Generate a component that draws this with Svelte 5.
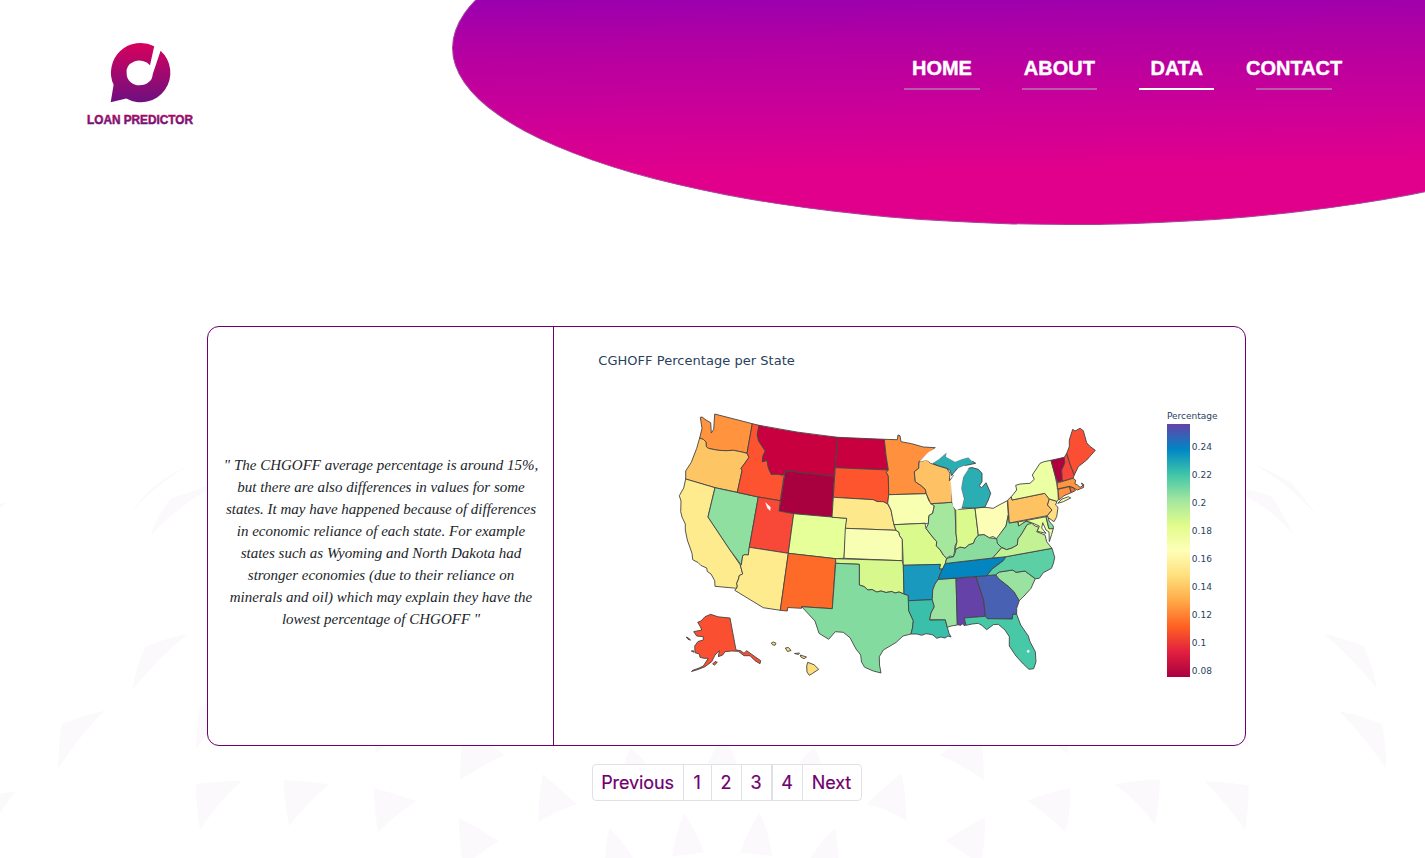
<script>
  const nav = [
    { label: 'HOME' },
    { label: 'ABOUT' },
    { label: 'DATA', active: true },
    { label: 'CONTACT' },
  ];

  const quote = [
    '" The CHGOFF average percentage is around 15%,',
    'but there are also differences in values for some',
    'states. It may have happened because of differences',
    'in economic reliance of each state. For example',
    'states such as Wyoming and North Dakota had',
    'stronger economies (due to their reliance on',
    'minerals and oil) which may explain they have the',
    'lowest percentage of CHGOFF "',
  ];

  const pages = [
    { label: 'Previous', w: 92 },
    { label: '1', w: 29 },
    { label: '2', w: 31 },
    { label: '3', w: 31 },
    { label: '4', w: 31, apart: true },
    { label: 'Next', w: 60 },
  ];

  const ticks = ['0.24', '0.22', '0.2', '0.18', '0.16', '0.14', '0.12', '0.1', '0.08'];

  const scale = [
    '#6542a7', '#0086c5', '#40c6a8', '#a2e69f', '#e1fc8b', '#feffb8',
    '#ffdf7d', '#ffa947', '#ff6122', '#e2203f', '#a90040',
  ];

  const states = [
    { id: 'WA', c: '#ff933e', d: 'M714.7 414L752.3 423.7L747 453.3L742 452L733.3 450.3L726 450.7L718.3 450.3L713 449.3L708.3 448.3L706.3 446.7L706 442L703.5 439.5L699.7 438L702 428.3L700.3 417.3L702 417L706 420L710.7 422.7L711.3 433L713.7 429.3L714.3 420Z' },
    { id: 'OR', c: '#fec565', d: 'M699.7 438L703.5 439.5L706 442L706.3 446.7L708.3 448.3L713 449.3L718.3 450.3L726 450.7L733.3 450.3L742 452L747 453.3L749 457.3L745 463L741 468.3L742 470.7L737.3 492.3L715 487.7L685.7 479V471L691.3 462.3L696.7 448.3Z' },
    { id: 'CA', c: '#feeb8e', d: 'M685.7 479L715 487.7L708 517L730 550L740.3 565L742.7 574L739.3 575.5L738.5 579L736.7 583.3L737.3 586L736.7 588.3L715 586.3L714.7 580.7L711 574L707.3 571.5L706.7 568L701 565.5L698 562.5L692.7 559.7L692 553.3L687.3 540L685.3 530V524L682 517L680.7 511.7L681 501L679.3 495.7L683.7 488Z' },
    { id: 'NV', c: '#8fdfa0', d: 'M715 487.7L758.3 497L749.3 547.3L748.3 555L745 554.6L742.7 555.7L741.3 565L730 550L708 517Z' },
    { id: 'ID', c: '#fd5330', d: 'M752.3 423.7L759 425.3L757.3 434.7L758.7 441L762 446L765.3 451L763 456L762.3 461.7L767 460.3L768.5 468L771.3 474.3L777 474L782 475L784.3 474L780.3 500.7L758.3 497L737.3 492.3L742 470.7L741 468.3L745 463L749 457.3L747 453.3Z' },
    { id: 'MT', c: '#c9003f', d: 'M759 425.3Q797 433 837.7 437.3L834.3 476.3L785.3 470.7L784.3 474L782 475L777 474L771.3 474.3L768.5 468L767 460.3L762.3 461.7L763 456L765.3 451L762 446L758.7 441L757.3 434.7Z' },
    { id: 'WY', c: '#a90040', d: 'M785.3 470.7L834.3 476.3L832 517.3L793.7 513.7L779 511Z' },
    { id: 'UT', c: '#f84837', d: 'M758.3 497L780.3 500.7L779 511L793.7 513.7L788.3 553.3L749.3 547.3Z' },
    { id: 'CO', c: '#e7ff98', d: 'M793.7 513.7L846.7 518.3L844 558.3L835.7 558.7L788.3 553.3Z' },
    { id: 'AZ', c: '#feeb8e', d: 'M749.3 547.3L788.3 553.3L780.3 610.3L763.3 607.7L734.7 590.3L736.7 588.3L737.3 586L736.7 583.3L738.5 579L739.3 575.5L742.7 574L740.3 565L741.3 565L742.7 555.7L745 554.6L748.3 555Z' },
    { id: 'NM', c: '#fe6a28', d: 'M788.3 553.3L835.7 558.7L832.3 608.7L801.7 606.7L801.5 608.3L787.7 607.5L787.3 611L780.3 610.3Z' },
    { id: 'ND', c: '#c9003f', d: 'M837.7 437.3L884.3 439.3L886 455L888.3 470L835.3 467.7Z' },
    { id: 'SD', c: '#fe552f', d: 'M835.3 467.7L888.3 470L886.3 472.3L888.3 476L888.7 494.7L887.7 504L883.3 501.7L877 501.5L873.3 499.7L833.3 497.3Z' },
    { id: 'NE', c: '#fde88b', d: 'M833.3 497.3L873.3 499.7L877 501.5L883.3 501.7L887.7 504L891 510L892.3 516.7L894 524.7L896 530.3L845.3 528.3L846.7 518.3L832 517.3Z' },
    { id: 'KS', c: '#f8ffb2', d: 'M845.3 528.3L896 530.3L899 532.3L899.5 535.5L902.3 539.3V560.7L844 558.3Z' },
    { id: 'OK', c: '#d6f88c', d: 'M835.7 558.7L902.3 560.7L903.3 565.3L904 594L899 592L895 593L891.7 591.5L886 592.5L881 591L876.7 592L872 589.5L868 590L864 586.5L859.3 585V564.3L835.7 563.3Z' },
    { id: 'TX', c: '#83dba0', d: 'M835.7 563.3L859.3 564.3V585L864 586.5L868 590L872 589.5L876.7 592L881 591L886 592.5L891.7 591.5L895 593L899 592L904 594L908.3 595.3L908.7 610.7L913.3 620.7L912.5 628L911 634L903 636L896 642.5L883.3 650L879.3 656.7L879.5 665L881 673L873.3 671L864.7 667.3L861.5 662L860.7 655L856 649L850 637.7L843.3 632.3L835.3 631.7L828.7 639.3L819 633.3L815 621L808 613.5L801.7 606.7L832.3 608.7Z' },
    { id: 'MN', c: '#ff903d', d: 'M884.3 439.3L897.3 439.7L898 435L900 435.7L901 441.7L911.7 443.7L918 445.5L923.3 447L935.3 447.7L919 461.7L918.7 468.3L914.3 471.7L915.3 481.7L921 485.5L925.3 489.3L926.3 493.7L888.7 494.7L888.3 476L886.3 472.3L888.3 470L886 455Z' },
    { id: 'IA', c: '#f9ffb1', d: 'M888.7 494.7L926.3 493.7L929 501L934.3 505.7L932.7 513.3L929 515.5L928.6 519L928.3 524L925 523.3L894 524.7L892.3 516.7L891 510L887.7 503.3Z' },
    { id: 'MO', c: '#dafa8d', d: 'M894 524.7L925 523.3L926 528.3L931 535L936.7 541.7L936.3 546L940 549.5L943.3 555L946.7 558.3L945.3 563.3L942.7 569L939.3 569L940.3 564.4L903.3 565.3L902.3 539.3L899.5 535.5L899 532.3L896 530.3Z' },
    { id: 'AR', c: '#1a99be', d: 'M903.3 565.3L940.3 564.4L939.3 569L942.3 569.3L940 574L938.3 579.3L935 584L932.7 590L932.3 599.7L908.3 600.7V595.3L904 594Z' },
    { id: 'LA', c: '#3abfab', d: 'M908.3 600.7L932.3 599.7L934.3 606.7L931 613L929.7 620L945.3 619.7L947.3 627.3L949 633.3L951 637L948 636L945 638L941 637L936.7 638.3L933 635L930 634.3L926 633.7L921.7 635.3L917 634L911 634L912.5 628L913.3 620.7L908.7 610.7Z' },
    { id: 'MS', c: '#9be39f', d: 'M938.3 579.3L956 578.3L957.3 625L951 626L947.3 627.3L945.3 619.7H929.7L931 613L934.3 606.7L932.3 599.7L932.7 590L935 584Z' },
    { id: 'AL', c: '#6542a7', d: 'M956 578.3L976 576.7L983.7 600L985.3 616.3L964.3 618L966 621.7L965 626L962.3 623.8L961 625.3L957.3 624.7Z' },
    { id: 'GA', c: '#4961b3', d: 'M976 576.7L995.7 574.7L999 579L1008 586L1014 591.7L1019.3 600.7L1016.7 608.3V614.3L1012.7 614.3L1012.3 619L987.3 618.7L985.3 616.3L983.7 600Z' },
    { id: 'FL', c: '#47c9a8', d: 'M964.3 618L985.3 616.3L987.3 618.7L1012.3 619L1012.7 614.3H1016.7L1020.7 625L1028.3 636L1030 641.7L1035.3 651.7L1036 661.7L1033.7 668.7L1029 669.3L1023.3 664L1016 656L1009.3 646V636.7L1005 630L998.3 624.3L993.3 624.7L986.7 629.7L982 625.5L978.3 623.3L972 624L966 625.3Z' },
    { id: 'SC', c: '#9ae29f', d: 'M995.7 574.7L999.3 572L1012.7 570L1016 572.3L1025 571L1035.3 578.7L1031 588.3L1025 595L1019.3 600.7L1014 591.7L1008 586L999 579Z' },
    { id: 'NC', c: '#5dcfa4', d: 'M1006 556.7L1052 548.3L1054.7 557.3L1053.5 563L1051.5 568.3L1043.3 572.7L1039.3 578.3L1035.3 578.7L1025 571L1016 572.3L1012.7 570L999.3 572L995.7 574.7L986.7 575.7L991.7 569.3L1000 563.3Z' },
    { id: 'TN', c: '#0386c0', d: 'M945.3 563.7L957.7 562L1006 556.7L1003 561L996 565.5L991.7 569.3L986.7 575.7L938.3 579.3L942.3 569.3Z' },
    { id: 'KY', c: '#8add9f', d: 'M945.3 563.5L946.7 558.3L953.3 556.7L955 553.3L956 549L960 547L965 548L969 544.5L973.3 543.3L975 539L978.3 535L984 534.5L989.3 537.7L997.3 539L998 544L1001.7 547.7L992.7 558L957.7 562Z' },
    { id: 'IL', c: '#a4e79d', d: 'M930.7 503.7L952 502.3L955 510L956 533.3L957 541.7L955 546L954.7 551L953.3 556.7L950 556L946.7 558.3L943.3 555L940 549.5L936.3 546L936.7 541.7L931 535L926 528.3L928.3 524L928.6 519L929 515.5L932.7 513.3L934.3 505.7Z' },
    { id: 'IN', c: '#dbfa8e', d: 'M955.7 509.7L975 508L978.3 535L975 539L973.3 543.3L969 544.5L965 548L960 547L955 549.5L957 541.7L956 533.3Z' },
    { id: 'OH', c: '#fdfeb6', d: 'M975 508L985 507.3L993.3 508.3L1000 504.5L1007.3 500.7L1008.3 515L1006 526L1002 531.5L999.3 536.7L997.3 539L993 536.5L989.3 537.7L984 534.5L978.3 535Z' },
    { id: 'WV', c: '#86dda0', d: 'M1008.3 515L1009.3 523L1017.7 521.7L1018.7 526L1022 523.5L1026 521.3L1031.7 522.7L1030 525L1027.3 524.5L1024 530L1021 535L1018 539L1017.3 545L1012 548L1006.7 549.7L1001 547L997.3 543.3L996.7 538.3L1001.7 531.7L1006 526Z' },
    { id: 'VA', c: '#c2f294', d: 'M992.7 558L1001.7 547.7L1006.7 549.7L1012 548L1017.3 545L1018 539L1021 535L1024 530L1027.3 524.5L1031.7 523.3L1035 526L1039 527.3L1036.7 531.7L1045 535L1046.7 541.7L1050 546L1052 548.3L1006 556.7Z' },
    { id: 'MD', c: '#e7ff98', d: 'M1018.3 522L1046 516.7L1048.7 528.3H1053.3L1051.7 534.3L1049.3 541.7L1049 532L1046 530L1042.7 522.7L1041.7 528L1046 533.3L1037.3 531.3L1039.3 526L1031.7 522.7L1026 521L1018.7 526Z' },
    { id: 'DE', c: '#8cdea0', d: 'M1046 516.7L1048 516L1049 521L1053.3 526V528.7H1049Z' },
    { id: 'PA', c: '#fec263', d: 'M1007.7 500L1011.3 496.7L1012 500L1044.7 493.3L1049.3 499L1047.5 505L1052 510L1047.3 515.7L1009.3 523Z' },
    { id: 'NJ', c: '#fedf82', d: 'M1049.3 499L1057 501.3L1055.5 505L1058 507.3L1056.7 516.7L1054 521.7L1048.3 517.7L1047.3 515.7L1052 510L1047.5 505Z' },
    { id: 'NY', c: '#edffa3', d: 'M1012 500L1011.3 496.7L1016.7 490L1015.7 485.3L1020 484L1030 483.3L1034.3 479.3L1032.3 475L1040 463.3L1044 461.7L1051 460.3L1055 475L1056.7 483.3L1058 490L1058.3 500L1057 501.3L1049.3 499L1044.7 493.3Z M1057.7 503.3L1062 499L1068.3 496.7L1070.7 498L1063.3 501.7Z' },
    { id: 'VT', c: '#b0003e', d: 'M1051 460.3L1064.3 457.3L1064.7 463.3L1061.7 470L1062.3 481L1057.3 482.3L1055 475Z' },
    { id: 'NH', c: '#f74539', d: 'M1064.3 457.3L1066.7 453.3L1070 464L1074.3 475L1073 478.3L1062.3 481.3L1061.7 470L1064.7 463.3Z' },
    { id: 'ME', c: '#fa4f33', d: 'M1066.7 453.3L1069.3 446.7V440L1072.7 429.3L1075 431L1080 428.3L1083.3 430.7L1086.7 442.7L1089.5 446L1095.3 450.3L1086.7 460L1078.3 466.7L1074.3 475L1070 464Z' },
    { id: 'MA', c: '#ff963f', d: 'M1057.3 483L1073 478.3L1075.5 480L1075 484L1077.5 485L1080 487.3L1082.8 486L1081.5 483L1083.7 484.5L1083.5 487.5L1077.3 490L1073.3 487.7L1069.3 486.3L1057.3 489Z' },
    { id: 'RI', c: '#fd6a2d', d: 'M1069.3 486.7L1073.3 487.7L1075.5 490.5L1071.3 492.7Z' },
    { id: 'CT', c: '#ff9140', d: 'M1058 489.3L1069.3 486.7L1071 492.7L1064 495.7L1059 500Z' },
    { id: 'WI', c: '#fec163', d: 'M919 461.7L926.7 460L930.7 463.3L939 466L946.7 468.3L950 473.3L949.3 480.7L954.3 475L951.7 486.7L952 502.3L930.7 503.7L926.3 493.7L925.3 489.3L921 485.5L915.3 481.7L914.3 471.7L918.7 468.3Z' },
    { id: 'MI', c: '#2aadb3', d: 'M932.3 463.3L939 459L946.7 452.3L946 456.7L955 461.7L962 459L968.3 457.3L971.7 460.7L975.7 463.3L970 464.5L963.3 466L957 469L953.3 473.3L951.7 475.7L950 470L946.7 468.3L939 466Z M961.7 508L964 498.3L961 488.3L963.3 476.7L968.3 468.3L972 467.6L978.3 469.3L982 473.3V481.7L979.3 485.7L981.7 487.7L986 482.7L990.7 493.3L988.3 500L985 507L975 508Z' },
    { id: 'AK', c: '#fb4f32', d: 'M710.7 614.3L718 616.8L730 618L736 650L740.7 650.7L744 653.3L746.7 650.7L755 656.7L760.7 660.7L760 663.7L755 660.7L750 655.7L744 655.7L738.3 651.3L731.7 651L725 651.7L722.7 655L718.3 656.7L719.3 650.7L715 655L711.7 661.7L705 666.7L698 669.5L691.5 671.5L692.7 670.3L698 668.5L703.3 666L708.3 658.3L704 658.3L700 657.3L699.3 654L695 652.7L694.7 646L698 641.5L703.3 640V636.7L696.7 636L693.7 631.7L701.7 630L700.5 627L697.7 622.3L701 621L705 616.7Z M686.3 637L688.5 638L690.5 640.2L688 639.3Z M691.3 651L693.5 650.8L693.8 652.2Z M712.7 664L715 661.5L717.3 662.3L714.5 665Z' },
    { id: 'HI', c: '#fedd7b', d: 'M771.3 643L773.5 642L776 643.3L775 645.3L772.5 644.8Z M785.3 648L788.5 647.5L791 650.5L787.5 651.5Z M794.5 653.5L799.5 653L798.5 654.5Z M800.3 655L806.5 657L804 658.7L800.8 657Z M807.7 662.3L814 664.7L818.7 669.3L812.7 673.3L809.3 675.3L807 672L806.7 666Z' },
  ];

  const lakes = [
    'M920 461.2L928.3 452.5L935.8 448.2L944 444L966.7 451.7L978 460L971.7 460.7L968.3 457.3L962 459L955 461.7L946 456.7L946.7 452.3L939 459L932.3 463.3L926.7 460Z',
    'M950.8 480.7L958.3 468.3L964 466L969 466.3L967.5 470L963 477L961 488.3L963.7 499L961.7 507.3L956.7 510L953 506L951.5 491.7Z',
    'M765.7 502.8L768 505L770.3 507L770 510.5L767.5 508Z',
  ];
</script>

<div class="page">
  <svg class="backdrop" viewBox="0 0 1425 858" aria-hidden="true">
    <g transform="translate(0 430) scale(.33333)">
      <path d="M380 260Q430 200 455 175Q510 130 575 103Q480 150 380 260ZM452 315Q480 240 515 203Q570 190 625 165V180Q540 225 452 315ZM398 778Q410 700 437 650Q495 625 562 612Q480 680 398 778ZM175 1015Q175 940 186 882Q250 856 313 842Q240 915 175 1015ZM588 955Q590 880 601 825L625 820V912ZM0 1092L46 1084Q20 1120 0 1150ZM588 1063Q650 1054 724 1053Q650 1120 600 1200Q588 1130 588 1063ZM852 1050Q920 1052 987 1063Q920 1120 868 1188Q852 1120 852 1050ZM1122 1074Q1190 1092 1250 1114Q1190 1150 1135 1207Q1122 1140 1122 1074ZM1126 940H1165L1126 972ZM0 222L20 216L0 235Z" />
    </g>
    <g transform="translate(440 730) scale(.35714)">
      <path d="M62 40H140L180 70Q115 100 56 140Q56 90 62 40ZM288 123Q340 165 382 208Q330 225 275 258Q275 190 288 123ZM514 102Q522 70 534 50Q560 70 582 102V115H514ZM746 102Q762 70 775 43H808Q825 70 834 102V115H746ZM1000 102Q1025 65 1048 48Q1062 70 1068 102V115H1000ZM1398 70L1440 40H1518Q1523 90 1522 140Q1465 100 1398 70ZM1195 208Q1240 160 1293 121Q1305 190 1306 254Q1255 220 1195 208ZM53 247Q110 275 163 310Q110 345 66 384Q53 310 53 247ZM462 384Q463 320 474 273Q520 320 549 374L530 384ZM650 353Q660 285 684 233Q715 280 740 343ZM841 344Q862 280 895 233Q920 280 930 353ZM1030 375Q1060 315 1106 275Q1117 330 1116 384H1055ZM1415 311Q1465 275 1526 245Q1526 320 1514 380Q1465 340 1415 311ZM270 362L296 384H270ZM1310 362V384H1280Z" />
    </g>
    <g transform="translate(980 430) scale(.33333)">
      <path d="M825 104Q880 125 935 160Q975 205 1008 255Q930 165 825 104ZM790 177Q830 180 876 202Q910 250 940 315Q880 240 790 195ZM1030 612Q1100 625 1152 650Q1180 710 1190 775Q1110 675 1030 612ZM1077 843Q1150 858 1207 884Q1220 950 1217 1014Q1150 915 1077 843ZM797 915L804 950L795 940ZM404 1063Q470 1050 539 1049Q539 1120 524 1183Q470 1110 404 1063ZM673 1053Q740 1055 806 1066Q806 1140 795 1200Q740 1120 673 1053ZM142 1113Q200 1087 271 1074Q271 1145 257 1206Q200 1150 142 1113ZM235 950L264 940V972Z" />
    </g>
  </svg>

  <header>
    <div class="blob"></div>
    <svg class="logo" width="112" height="96" viewBox="84 40 112 96" role="img" aria-label="Loan Predictor">
      <defs>
        <linearGradient id="mark" x1="0" y1="43" x2="0" y2="103" gradientUnits="userSpaceOnUse">
          <stop offset="0" stop-color="#d8005c" />
          <stop offset="1" stop-color="#6c1080" />
        </linearGradient>
        <linearGradient id="word" x1="0" y1="113" x2="0" y2="126" gradientUnits="userSpaceOnUse">
          <stop offset="0" stop-color="#b3085f" />
          <stop offset="1" stop-color="#64147f" />
        </linearGradient>
      </defs>
      <path
        fill="url(#mark)"
        d="M154.2 46.3A29.6 29.6 0 0 0 113.6 84.8L110.7 102.2L126.3 98.5A29.6 29.6 0 0 0 160.6 50.7L152.7 74.2A13 11.2 0 0 1 126.7 74A13 11.2 0 0 1 150 65.2Z"
      />
      <text x="87" y="124.3" textLength="106" lengthAdjust="spacingAndGlyphs" fill="url(#word)" stroke="url(#word)">LOAN PREDICTOR</text>
    </svg>
    <nav>
      {#each nav as item}
        <a href="#{item.label.toLowerCase()}" class:active={item.active}>{item.label}</a>
      {/each}
    </nav>
  </header>

  <main>
    <section class="card">
      <blockquote>
        {#each quote as line}
          <span>{line}</span>
        {/each}
      </blockquote>
      <figure>
        <svg width="691" height="418" viewBox="554 327 691 418">
          <defs>
            <linearGradient id="bar" x1="0" y1="0" x2="0" y2="1">
              {#each scale as color, i}
                <stop offset={i / 10} stop-color={color} />
              {/each}
            </linearGradient>
          </defs>
          <text class="title" x="598.3" y="365" textLength="196.5">CGHOFF Percentage per State</text>
          <g class="states">
            {#each states as s (s.id)}
              <path d={s.d} fill={s.c} />
            {/each}
          </g>
          <g class="lakes">
            {#each lakes as d}
              <path {d} />
            {/each}
            <circle cx="1028.2" cy="651.3" r="1.1" />
          </g>
          <text class="tick" x="1167" y="419" textLength="50.5">Percentage</text>
          <rect x="1167" y="424" width="23" height="253" fill="url(#bar)" />
          {#each ticks as t, i}
            <text class="tick" x="1191.8" y={450 + i * 28} textLength={t.length === 4 ? 20.3 : 14.5}>{t}</text>
          {/each}
        </svg>
      </figure>
    </section>

    <ul class="pagination">
      {#each pages as p}
        <li class:apart={p.apart} style="width: {p.w}px"><a href="#page">{p.label}</a></li>
      {/each}
    </ul>
  </main>
</div>

<style>
  :global(body) {
    margin: 0;
    background: #fff;
  }
  .page {
    position: relative;
    width: 1425px;
    height: 858px;
    overflow: hidden;
    font-family: 'Liberation Sans', Arial, sans-serif;
  }
  .backdrop {
    position: absolute;
    inset: 0;
    width: 1425px;
    height: 858px;
    fill: #fbf9fb;
  }
  header {
    position: relative;
    display: flex;
    justify-content: space-between;
    box-sizing: border-box;
    height: 326px;
    padding: 40px 72.2px 0 84px;
    overflow: hidden;
  }
  .blob {
    position: absolute;
    left: 452px;
    top: -129px;
    box-sizing: border-box;
    width: 1232px;
    height: 354px;
    border: 1px solid #a0489c;
    border-radius: 50%;
    background: linear-gradient(179.3deg, #9c00ae 36%, #b300a2 48%, #cc0098 67%, #e1008c 83%);
  }
  .logo {
    position: relative;
    flex: none;
    overflow: visible;
  }
  .logo text {
    font: bold 13px 'Liberation Sans', Arial, sans-serif;
    stroke-width: 0.5px;
  }
  nav {
    position: relative;
    display: grid;
    grid-template-columns: repeat(4, 117.4px);
    height: 50px;
  }
  nav a {
    display: flex;
    flex-direction: column;
    align-items: center;
    justify-content: flex-end;
    color: #fff;
    font-size: 20px;
    font-weight: bold;
    line-height: 24px;
    text-decoration: none;
    -webkit-text-stroke: 0.4px #fff;
  }
  nav a::after {
    content: '';
    width: 75.5px;
    height: 2px;
    margin-top: 8px;
    background: #b95aab;
  }
  nav a.active::after {
    background: #fff;
  }
  main {
    position: relative;
    display: flex;
    flex-direction: column;
    align-items: center;
    gap: 18px;
    padding-left: 28px;
  }
  .card {
    display: flex;
    box-sizing: border-box;
    width: 1039px;
    height: 420px;
    border: 1px solid #6b0070;
    border-radius: 12px;
    background: #fff;
    overflow: hidden;
  }
  blockquote {
    display: flex;
    flex-direction: column;
    justify-content: center;
    box-sizing: border-box;
    width: 346px;
    margin: 0;
    padding: 12px 0 0 1px;
    border-right: 1px solid #6b0070;
    color: #212529;
    font: italic 15px/22px 'Liberation Serif', 'Times New Roman', serif;
    text-align: center;
    white-space: nowrap;
  }
  figure {
    margin: 0;
  }
  figure svg {
    display: block;
  }
  .title,
  .tick {
    fill: #2a3f5f;
    font-family: 'DejaVu Sans', Verdana, sans-serif;
  }
  .title {
    font-size: 13px;
  }
  .tick {
    font-size: 9px;
  }
  .states path {
    stroke: #444;
    stroke-width: 0.9px;
    stroke-linejoin: round;
  }
  .lakes {
    fill: #fff;
    stroke: #fff;
    stroke-width: 0.5px;
  }
  .pagination {
    display: flex;
    box-sizing: border-box;
    height: 37px;
    margin: 0;
    padding: 0;
    list-style: none;
  }
  .pagination li {
    box-sizing: border-box;
    border: 1px solid #dee2e6;
    background: #fff;
  }
  .pagination li + li {
    margin-left: -1px;
  }
  .pagination li.apart {
    margin-left: 0;
  }
  .pagination li:first-child {
    border-radius: 4px 0 0 4px;
  }
  .pagination li:last-child {
    border-radius: 0 4px 4px 0;
  }
  .pagination a {
    display: block;
    color: #70006f;
    font: 18px/35px Inter, sans-serif;
    letter-spacing: -0.1px;
    text-align: center;
    text-decoration: none;
    -webkit-text-stroke: 0.2px #70006f;
  }
</style>
